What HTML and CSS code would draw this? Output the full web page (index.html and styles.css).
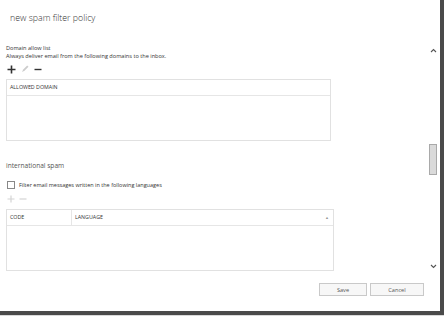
FILE: index.html
```html
<!DOCTYPE html>
<html lang="en">

<head>
    <meta charset="UTF-8">
    <title>new spam filter policy</title>
    <link rel="stylesheet" href="styles.css">
</head>

<body>
    <div class="window">
        <div class="header">
            <h1 class="title">new spam filter policy</h1>
        </div>

        <div class="main">
            <div class="content">
                <div class="field-label">Domain allow list</div>
                <div class="field-help">Always deliver email from the following domains to the inbox.</div>

                <div class="toolbar">
                    <!-- agregar -->
                    <svg class="tool" width="9" height="9" viewBox="0 0 9 9">
                        <path d="M4.5 0.5v8M0.5 4.5h8" stroke="#333" stroke-width="1.6" fill="none"/>
                    </svg>
                    <!-- editar -->
                    <svg class="tool" width="8" height="8" viewBox="0 0 8 8">
                        <path d="M1 7l1.2-2.6L6.2 0.5l1.3 1.3-4 4z" fill="#ccc"/>
                    </svg>
                    <!-- quitar -->
                    <svg class="tool" width="8" height="9" viewBox="0 0 8 9">
                        <path d="M0.5 4.5h7" stroke="#333" stroke-width="1.4" fill="none"/>
                    </svg>
                </div>

                <div class="grid grid-domains">
                    <div class="grid-head">
                        <div class="cell">ALLOWED DOMAIN</div>
                    </div>
                    <div class="grid-body"></div>
                </div>

                <h2 class="section-title">international spam</h2>

                <label class="check-row">
                    <span class="checkbox"></span>
                    <span>Filter email messages written in the following languages</span>
                </label>

                <div class="toolbar toolbar-off">
                    <svg class="tool" width="8" height="8" viewBox="0 0 8 8">
                        <path d="M4 0.5v7M0.5 4h7" stroke="#d4d4d4" stroke-width="1.2" fill="none"/>
                    </svg>
                    <svg class="tool" width="8" height="8" viewBox="0 0 8 8">
                        <path d="M0.5 4h7" stroke="#d4d4d4" stroke-width="1.2" fill="none"/>
                    </svg>
                </div>

                <div class="grid grid-languages">
                    <div class="grid-head">
                        <div class="cell cell-code">CODE</div>
                        <div class="cell cell-lang">LANGUAGE <span class="sort">&#9650;</span></div>
                    </div>
                    <div class="grid-body"></div>
                </div>
            </div>

            <div class="scrollbar">
                <svg class="arrow" width="7" height="5" viewBox="0 0 7 5">
                    <path d="M1 4l2.5-2.5L6 4" stroke="#555" stroke-width="1.1" fill="none"/>
                </svg>
                <div class="thumb"></div>
                <svg class="arrow arrow-down" width="7" height="5" viewBox="0 0 7 5">
                    <path d="M1 1l2.5 2.5L6 1" stroke="#555" stroke-width="1.1" fill="none"/>
                </svg>
            </div>
        </div>

        <div class="footer">
            <button class="btn btn-save">Save</button>
            <button class="btn btn-cancel">Cancel</button>
        </div>
    </div>
</body>

</html>
```

FILE: styles.css
```css
body {
    margin: 0;
    background-color: #d9d9d9;
    font-family: "Open Sans", Arial, sans-serif;
    color: #444;
}

.window {
    width: 440px;
    height: 311px;
    background-color: #fff;
    border-right: 4px solid #4a4a4a;
    border-bottom: 4px solid #4a4a4a;
    display: flex;
    flex-direction: column;
}

.header {
    height: 40px;
    padding: 12px 0 0 10px;
    box-sizing: border-box;
}

.title {
    margin: 0;
    font-size: 8.8px;
    font-weight: 300;
    color: #333;
}

.main {
    flex: 1;
    display: flex;
}

.content {
    flex: 1;
    padding: 4px 0 0 6px;
}

.field-label,
.field-help {
    font-size: 5.6px;
    line-height: 8px;
    color: #333;
}

/* Barra de botones + / lapiz / - */
.toolbar {
    display: flex;
    align-items: center;
    gap: 5px;
    height: 10px;
    margin: 4px 0 5px 1px;
}

.toolbar-off {
    margin: 5px 0 5px 1px;
    gap: 4px;
}

.tool {
    display: block;
}

.grid {
    border: 1px solid #e1e1e1;
    box-sizing: border-box;
    height: 62px;
}

.grid-domains {
    width: 325px;
}

.grid-languages {
    width: 328px;
}

.grid-head {
    display: flex;
    height: 15px;
    border-bottom: 1px solid #e6e6e6;
}

.cell {
    font-size: 5.3px;
    line-height: 15px;
    padding-left: 3px;
    color: #333;
}

.cell-code {
    width: 61px;
    border-right: 1px solid #e6e6e6;
}

.cell-lang {
    flex: 1;
    display: flex;
    justify-content: space-between;
}

.sort {
    font-size: 4px;
    color: #999;
    padding-right: 4px;
}

.section-title {
    margin: 20px 0 0 0;
    font-size: 6.6px;
    font-weight: 400;
    line-height: 10px;
    color: #555;
}

.check-row {
    display: flex;
    align-items: center;
    gap: 4px;
    margin: 10px 0 0 1px;
    font-size: 5.5px;
    color: #333;
}

.checkbox {
    width: 6px;
    height: 6px;
    border: 1px solid #888;
    background-color: #fff;
}

/* Barra de desplazamiento */
.scrollbar {
    width: 14px;
    display: flex;
    flex-direction: column;
    align-items: center;
    padding: 8px 0 8px 0;
}

.thumb {
    width: 8px;
    height: 31px;
    margin-top: 91px;
    background-color: #dadada;
    border: 1px solid #a9a9a9;
    box-sizing: border-box;
}

.arrow-down {
    margin-top: auto;
}

.footer {
    height: 34px;
    display: flex;
    justify-content: flex-end;
    gap: 3px;
    padding: 6px 16px 0 0;
    box-sizing: border-box;
}

.btn {
    height: 13px;
    padding: 0;
    font-family: "Open Sans", Arial, sans-serif;
    font-size: 5.6px;
    color: #555;
    background-color: #f7f7f7;
    border: 1px solid #c9c9c9;
}

.btn-save {
    width: 48px;
}

.btn-cancel {
    width: 54px;
}
```
